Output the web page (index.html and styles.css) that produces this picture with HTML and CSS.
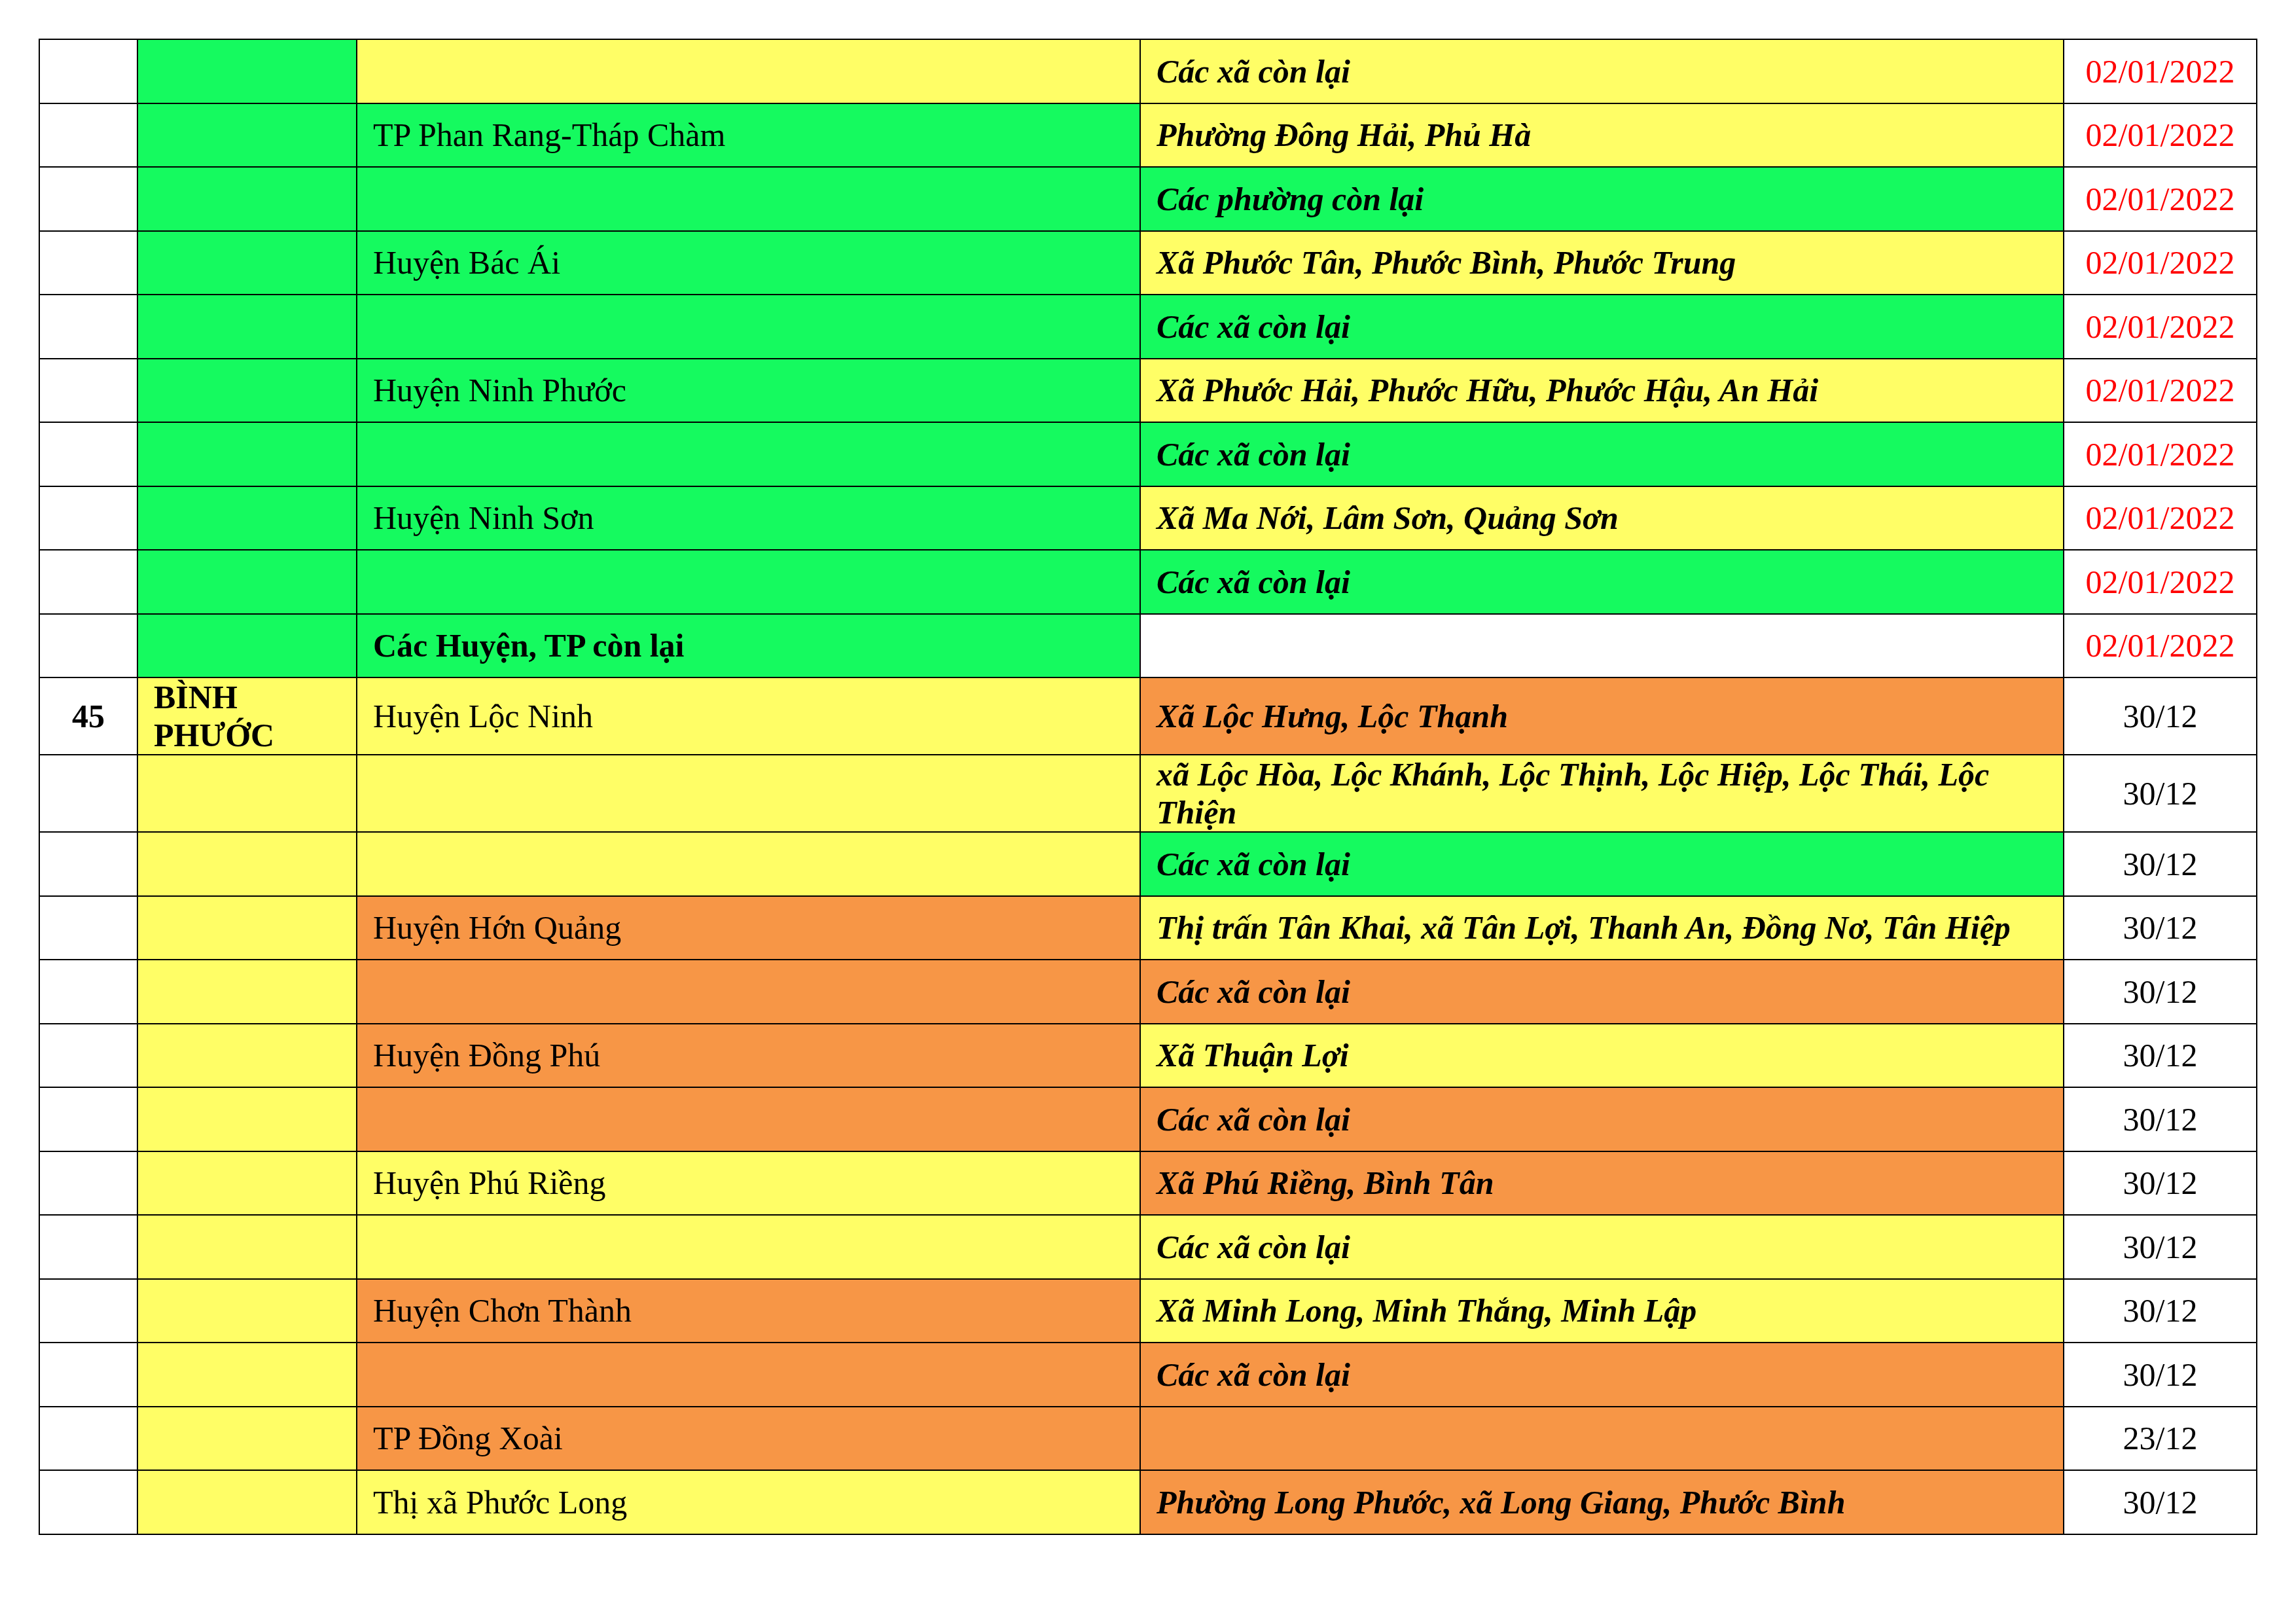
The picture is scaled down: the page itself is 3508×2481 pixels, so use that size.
FILE: index.html
```html
<!DOCTYPE html>
<html lang="vi">
<head>
<meta charset="utf-8">
<title>Danh sách</title>
<link rel="stylesheet" href="styles.css">
</head>
<body>
<table class="sheet">
  <colgroup>
    <col class="c-stt">
    <col class="c-prov">
    <col class="c-dist">
    <col class="c-ward">
    <col class="c-date">
  </colgroup>
  <tbody>
    <tr>
      <td></td><td class="g"></td><td class="y"></td>
      <td class="y w">Các xã còn lại</td><td class="d red">02/01/2022</td>
    </tr>
    <tr>
      <td></td><td class="g"></td><td class="g">TP Phan Rang-Tháp Chàm</td>
      <td class="y w">Phường Đông Hải, Phủ Hà</td><td class="d red">02/01/2022</td>
    </tr>
    <tr>
      <td></td><td class="g"></td><td class="g"></td>
      <td class="g w">Các phường còn lại</td><td class="d red">02/01/2022</td>
    </tr>
    <tr>
      <td></td><td class="g"></td><td class="g">Huyện Bác Ái</td>
      <td class="y w">Xã Phước Tân, Phước Bình, Phước Trung</td><td class="d red">02/01/2022</td>
    </tr>
    <tr>
      <td></td><td class="g"></td><td class="g"></td>
      <td class="g w">Các xã còn lại</td><td class="d red">02/01/2022</td>
    </tr>
    <tr>
      <td></td><td class="g"></td><td class="g">Huyện Ninh Phước</td>
      <td class="y w">Xã Phước Hải, Phước Hữu, Phước Hậu, An Hải</td><td class="d red">02/01/2022</td>
    </tr>
    <tr>
      <td></td><td class="g"></td><td class="g"></td>
      <td class="g w">Các xã còn lại</td><td class="d red">02/01/2022</td>
    </tr>
    <tr>
      <td></td><td class="g"></td><td class="g">Huyện Ninh Sơn</td>
      <td class="y w">Xã Ma Nới, Lâm Sơn, Quảng Sơn</td><td class="d red">02/01/2022</td>
    </tr>
    <tr>
      <td></td><td class="g"></td><td class="g"></td>
      <td class="g w">Các xã còn lại</td><td class="d red">02/01/2022</td>
    </tr>
    <tr>
      <td></td><td class="g"></td><td class="g b">Các Huyện, TP còn lại</td>
      <td></td><td class="d red">02/01/2022</td>
    </tr>
    <tr class="tall">
      <td class="stt">45</td><td class="y prov">BÌNH PHƯỚC</td><td class="y">Huyện Lộc Ninh</td>
      <td class="o w">Xã Lộc Hưng, Lộc Thạnh</td><td class="d">30/12</td>
    </tr>
    <tr class="tall">
      <td></td><td class="y"></td><td class="y"></td>
      <td class="y w">xã Lộc Hòa, Lộc Khánh, Lộc Thịnh, Lộc Hiệp, Lộc Thái, Lộc Thiện</td><td class="d">30/12</td>
    </tr>
    <tr>
      <td></td><td class="y"></td><td class="y"></td>
      <td class="g w">Các xã còn lại</td><td class="d">30/12</td>
    </tr>
    <tr>
      <td></td><td class="y"></td><td class="o">Huyện Hớn Quảng</td>
      <td class="y w">Thị trấn Tân Khai, xã Tân Lợi, Thanh An, Đồng Nơ, Tân Hiệp</td><td class="d">30/12</td>
    </tr>
    <tr>
      <td></td><td class="y"></td><td class="o"></td>
      <td class="o w">Các xã còn lại</td><td class="d">30/12</td>
    </tr>
    <tr>
      <td></td><td class="y"></td><td class="o">Huyện Đồng Phú</td>
      <td class="y w">Xã Thuận Lợi</td><td class="d">30/12</td>
    </tr>
    <tr>
      <td></td><td class="y"></td><td class="o"></td>
      <td class="o w">Các xã còn lại</td><td class="d">30/12</td>
    </tr>
    <tr>
      <td></td><td class="y"></td><td class="y">Huyện Phú Riềng</td>
      <td class="o w">Xã Phú Riềng, Bình Tân</td><td class="d">30/12</td>
    </tr>
    <tr>
      <td></td><td class="y"></td><td class="y"></td>
      <td class="y w">Các xã còn lại</td><td class="d">30/12</td>
    </tr>
    <tr>
      <td></td><td class="y"></td><td class="o">Huyện Chơn Thành</td>
      <td class="y w">Xã Minh Long, Minh Thắng, Minh Lập</td><td class="d">30/12</td>
    </tr>
    <tr>
      <td></td><td class="y"></td><td class="o"></td>
      <td class="o w">Các xã còn lại</td><td class="d">30/12</td>
    </tr>
    <tr>
      <td></td><td class="y"></td><td class="o">TP Đồng Xoài</td>
      <td class="o"></td><td class="d">23/12</td>
    </tr>
    <tr>
      <td></td><td class="y"></td><td class="y">Thị xã Phước Long</td>
      <td class="o w">Phường Long Phước, xã Long Giang, Phước Bình</td><td class="d">30/12</td>
    </tr>
  </tbody>
</table>
</body>
</html>
```

FILE: styles.css
```css
html, body {
  margin: 0;
  padding: 0;
  background: #ffffff;
}

body {
  padding: 59px 0 0 59px;
  font-family: "Liberation Serif", "Times New Roman", serif;
  font-size: 50px;
  color: #000000;
}

.sheet {
  border-collapse: collapse;
  table-layout: fixed;
  width: 3390px;
}

.c-stt { width: 150px; }
.c-prov { width: 335px; }
.c-dist { width: 1197px; }
.c-ward { width: 1411px; }
.c-date { width: 295px; }

.sheet tr {
  height: 97.5px;
}

.sheet tr.tall {
  height: 117px;
}

.sheet td {
  border: 2px solid #000000;
  padding: 0 22px 0 24px;
  vertical-align: middle;
  text-align: left;
  line-height: normal;
  background: #ffffff;
}

.sheet td.g { background: #15fa5f; }
.sheet td.y { background: #fffe66; }
.sheet td.o { background: #f79646; }

.sheet td.w {
  font-weight: bold;
  font-style: italic;
}

.sheet td.b {
  font-weight: bold;
}

.sheet td.stt {
  text-align: center;
  font-weight: bold;
  padding: 0;
}

.sheet td.prov {
  font-weight: bold;
  padding: 0 8px 0 24px;
}

.sheet td.d {
  text-align: center;
  padding: 0;
}

.sheet td.red {
  color: #ff0000;
}
```
